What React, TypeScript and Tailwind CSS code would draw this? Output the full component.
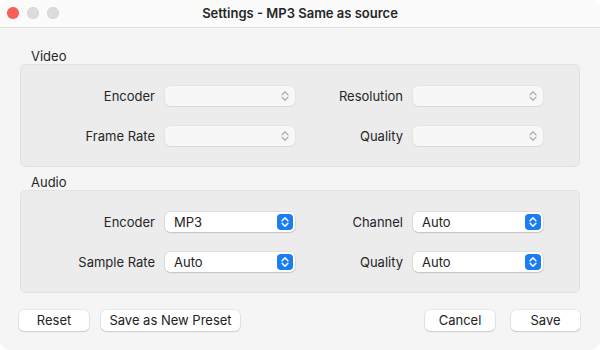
import * as React from 'react';

type Field = {
  label: string;
  value?: string;
};

type Group = {
  title: string;
  disabled: boolean;
  rows: [Field, Field][];
};

const groups: Group[] = [
  {
    title: 'Video',
    disabled: true,
    rows: [
      [{ label: 'Encoder' }, { label: 'Resolution' }],
      [{ label: 'Frame Rate' }, { label: 'Quality' }],
    ],
  },
  {
    title: 'Audio',
    disabled: false,
    rows: [
      [
        { label: 'Encoder', value: 'MP3' },
        { label: 'Channel', value: 'Auto' },
      ],
      [
        { label: 'Sample Rate', value: 'Auto' },
        { label: 'Quality', value: 'Auto' },
      ],
    ],
  },
];

const Chevrons = ({ color }: { color: string }) => (
  <svg aria-hidden="true" viewBox="0 0 16 16" className="size-[16px]" fill="none">
    <path
      d="M5.1 6.7 8 3.8l2.9 2.9M5.1 9.3 8 12.2l2.9-2.9"
      stroke={color}
      strokeWidth="1.5"
      strokeLinecap="round"
      strokeLinejoin="round"
    />
  </svg>
);

const Select = ({ value, disabled }: { value?: string; disabled: boolean }) =>
  disabled ? (
    <div className="flex h-[20px] w-[130px] items-center justify-end rounded-[5px] bg-[#f7f7f7] pr-[2px] shadow-[0_0_0_0.5px_rgba(0,0,0,0.06),0_1px_1px_rgba(0,0,0,0.06)]">
      <Chevrons color="#b4b4b4" />
    </div>
  ) : (
    <div className="flex h-[20px] w-[130px] items-center justify-between rounded-[5px] bg-white pr-[2px] pl-[9px] shadow-[0_0_0_0.5px_rgba(0,0,0,0.12),0_1px_1.5px_rgba(0,0,0,0.12)]">
      <span className="text-[13px] leading-none text-[#222]">{value}</span>
      <span className="flex size-[16px] items-center justify-center rounded-[4px] bg-[#1c7cf4]">
        <Chevrons color="#ffffff" />
      </span>
    </div>
  );

const Button = ({ label, width }: { label: string; width: string }) => (
  <button
    type="button"
    className={`flex h-[21px] items-center justify-center rounded-[5px] bg-white text-[13px] leading-none text-[#222] shadow-[0_0_0_0.5px_rgba(0,0,0,0.12),0_1px_1.5px_rgba(0,0,0,0.12)] ${width}`}
  >
    {label}
  </button>
);

export default function App() {
  return (
    <div className="h-[350px] w-[600px] bg-white font-['Inter','Noto_Sans',sans-serif]">
      <div className="flex h-full w-full flex-col overflow-hidden rounded-[10px] bg-[#f5f5f5]">
        {/* title bar */}
        <div className="relative flex h-[28px] shrink-0 items-center justify-center border-b border-[#dedede] bg-[#fbfbfb]">
          <div className="absolute top-[7px] left-[7px] flex gap-[8px]">
            <span className="size-[12px] rounded-full bg-[#fe5f57] shadow-[inset_0_0_0_0.5px_rgba(0,0,0,0.12)]" />
            <span className="size-[12px] rounded-full bg-[#dcdcdc] shadow-[inset_0_0_0_0.5px_rgba(0,0,0,0.06)]" />
            <span className="size-[12px] rounded-full bg-[#dcdcdc] shadow-[inset_0_0_0_0.5px_rgba(0,0,0,0.06)]" />
          </div>
          <span className="text-[13px] font-semibold text-[#262626]">Settings - MP3 Same as source</span>
        </div>

        {/* body */}
        <div className="flex flex-col px-[20px] pt-[20px]">
          {groups.map((group, gi) => (
            <div key={group.title} className={gi > 0 ? 'mt-[7px]' : ''}>
              <div className="h-[16px] pl-[11px] text-[13px] leading-[16px] text-[#262626]">{group.title}</div>
              <div className="flex h-[103px] flex-col gap-[20px] rounded-[5px] border border-[#e2e2e2] bg-[#ececec] pt-[21px]">
                {group.rows.map((row, ri) => (
                  <div key={ri} className="flex items-center">
                    <span className="w-[144px] pr-[10px] text-right text-[13px] leading-none text-[#262626]">
                      {row[0].label}
                    </span>
                    <Select value={row[0].value} disabled={group.disabled} />
                    <span className="w-[118px] pr-[10px] text-right text-[13px] leading-none text-[#262626]">
                      {row[1].label}
                    </span>
                    <Select value={row[1].value} disabled={group.disabled} />
                  </div>
                ))}
              </div>
            </div>
          ))}
        </div>

        {/* footer */}
        <div className="mt-[17px] flex items-center pr-[20px] pl-[19px]">
          <Button label="Reset" width="w-[70px]" />
          <div className="ml-[12px]">
            <Button label="Save as New Preset" width="w-[139px]" />
          </div>
          <div className="ml-auto flex gap-[16px]">
            <Button label="Cancel" width="w-[70px]" />
            <Button label="Save" width="w-[69px]" />
          </div>
        </div>
      </div>
    </div>
  );
}
